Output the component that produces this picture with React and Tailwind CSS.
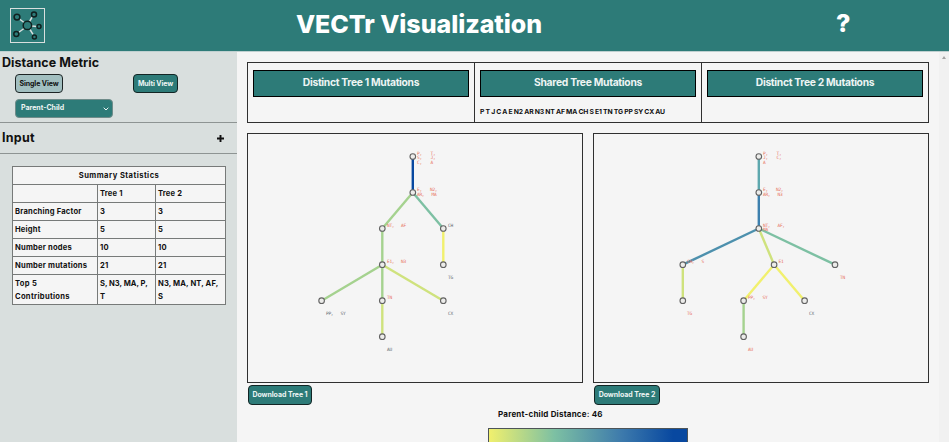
const EDGE = { green: '#a5d28f', lime: '#cfe27d', teal: '#7dc0a3', yellow: '#f1f06d', blue: '#4d90ad', navy: '#0848a0' };
const RED = '#e8705c';
const GREY = '#62676f';

const tree1 = {
  edges: [
    [165, 22.5, 165, 58.5, EDGE.navy], [165, 58.5, 134.5, 94.5, EDGE.green], [165, 58.5, 195.5, 94.5, EDGE.teal],
    [134.5, 94.5, 134.5, 130.7, EDGE.green], [195.5, 94.5, 195.5, 130.7, EDGE.yellow], [134.5, 130.7, 73.8, 166.7, EDGE.green],
    [134.5, 130.7, 134.5, 166.7, EDGE.green], [134.5, 130.7, 195.5, 166.7, EDGE.lime], [134.5, 166.7, 134.5, 202.7, EDGE.lime],
  ],
  nodes: [[165, 22.5], [165, 58.5], [134.5, 94.5], [195.5, 94.5], [134.5, 130.7], [195.5, 130.7], [73.8, 166.7], [134.5, 166.7], [195.5, 166.7], [134.5, 202.7]],
  labels: [
    [169, 21, 'P,', RED], [182.5, 21, 'T,', RED], [169, 25, 'S,', RED], [182.5, 25, 'J,', RED], [169, 29.7, 'C,', RED], [182.5, 29.7, 'A', RED],
    [169, 57, 'E,', RED], [182, 57, 'N2,', RED], [169, 61.5, 'AR,', RED], [183.5, 61.5, 'MA', RED],
    [139, 93, 'NT,', RED], [153, 93, 'AF', RED], [200, 93, 'CH', GREY],
    [139, 129, 'E1,', RED], [153, 129, 'N3', RED], [200, 145, 'TG', GREY],
    [78, 181, 'PP,', GREY], [92.5, 181, 'SY', GREY], [139, 165, 'TN', RED], [200, 181, 'CX', GREY], [139, 217, 'AU', GREY],
  ],
};

const tree2 = {
  edges: [
    [165, 22.5, 165, 58.5, '#5ea8ae'], [165, 58.5, 165, 94.5, '#3d80ae'], [165, 94.5, 89, 130.7, EDGE.blue],
    [165, 94.5, 180.3, 130.7, EDGE.lime], [165, 94.5, 241.2, 130.7, EDGE.teal], [89, 130.7, 89, 166.7, EDGE.lime],
    [180.3, 130.7, 149.8, 166.7, EDGE.yellow], [180.3, 130.7, 210.8, 166.7, EDGE.yellow], [149.8, 166.7, 149.8, 202.7, EDGE.green],
  ],
  nodes: [[165, 22.5], [165, 58.5], [165, 94.5], [89, 130.7], [180.3, 130.7], [241.2, 130.7], [89, 166.7], [149.8, 166.7], [210.8, 166.7], [149.8, 202.7]],
  labels: [
    [169, 21, 'P,', RED], [182.5, 21, 'T,', RED], [169, 25, 'J,', RED], [182.5, 25, 'C,', RED], [169, 29.7, 'A', RED],
    [169, 57, 'E,', RED], [182, 57, 'N2,', RED], [169, 61.5, 'AR,', RED], [183.5, 61.5, 'N3', RED],
    [169, 93, 'NT,', RED], [183.5, 93, 'AF,', RED], [169, 97.3, 'MA', RED],
    [93, 129, 'CH,', RED], [107.5, 129, 'S', RED], [184.5, 129, 'E1', RED], [246, 145, 'TN', RED],
    [93, 181, 'TG', RED], [154, 165, 'PP,', RED], [168.5, 165, 'SY', RED], [215, 181, 'CX', GREY], [154, 217, 'AU', RED],
  ],
};

function Tree({ data, title }) {
  return (
    <svg viewBox="0 0 334 249" width="334" height="249" className="block" role="img" aria-label={title}>
      {data.edges.map(([x1, y1, x2, y2, color], i) => (
        <line key={i} x1={x1 - 0.2} y1={y1} x2={x2 - 0.2} y2={y2} stroke={color} strokeWidth="2.4" />
      ))}
      {data.nodes.map(([x, y], i) => (
        <circle key={i} cx={x - 0.2} cy={y} r="2.8" fill="#ececea" stroke="#626262" strokeWidth="1.1" />
      ))}
      {data.labels.map(([x, y, label, color], i) => (
        <text key={i} x={x} y={y} fill={color} fontSize="4.5" letterSpacing="-0.3" fontFamily="DejaVu Sans Mono, monospace">{label}</text>
      ))}
    </svg>
  );
}

function Logo() {
  return (
    <svg width="36" height="36" viewBox="0 0 36 36" fill="none" className="ml-[10px]">
      <rect x="0.5" y="0.5" width="34" height="34" stroke="#d9dfde" strokeWidth="1" />
      <g stroke="#d9dfde" strokeWidth="1.5">
        <path d="M14 14.500 9.500 11M19.500 13.500 22.200 9M22 18l4.500.600M20 21.500 23 26.300M14 20.500 8.500 24.500" />
      </g>
      <g stroke="#10201f" strokeWidth="1.5">
        <circle cx="17.4" cy="17.4" r="4.2" />
        <circle cx="7" cy="9.1" r="2.9" />
        <circle cx="24" cy="6.4" r="2.5" />
        <circle cx="29" cy="18.6" r="2" />
        <circle cx="24.4" cy="29" r="2" />
        <circle cx="6.3" cy="26.1" r="2.5" />
      </g>
    </svg>
  );
}

function MutationColumn({ title, tracking, children }) {
  return (
    <div className="w-[227px] shrink-0 border-r border-[#303030] px-[5px] pt-[7px] last:w-[226px] last:border-r-0">
      <div className={`flex h-[27px] items-center justify-center border border-black bg-[#2d7b78] text-[10.3px] font-bold text-[#eef5f4] ${tracking}`}>{title}</div>
      <div className="mt-[9px] h-[12px] whitespace-nowrap text-[6.8px] font-bold leading-[12px] tracking-[-0.12px] [word-spacing:-0.27px]">{children}</div>
    </div>
  );
}

function TreePanel({ data, title, width }) {
  return (
    <div className="w-[336px]">
      <div className="h-[250px] overflow-hidden border border-[#303030]"><Tree data={data} title={title} /></div>
      <button className={`ml-px mt-[2px] flex h-[20px] items-center justify-center rounded-[4px] border border-[#132524] bg-[#2d7b78] text-[7px] font-bold tracking-[-0.05px] text-[#eef5f4] ${width}`}>{title}</button>
    </div>
  );
}

const rows = [
  ['', 'Tree 1', 'Tree 2'],
  ['Branching Factor', '3', '3'],
  ['Height', '5', '5'],
  ['Number nodes', '10', '10'],
  ['Number mutations', '21', '21'],
];
const cell = 'border border-[#777a79] px-[2px] pt-[2px] pb-0';

export default function App() {
  return (
    <div className="flex h-[442px] w-[949px] flex-col overflow-hidden bg-[#f5f5f5] font-[Inter,sans-serif] text-[#111]">
      <header className="grid h-[52px] shrink-0 grid-cols-[211px_416px_1fr] items-center border-b border-[#bfd0d0] bg-[#2d7b78] text-white">
        <Logo />
        <h1 className="whitespace-nowrap pb-[2px] text-center text-[25px] font-extrabold leading-none tracking-[-0.05px]">VECTr Visualization</h1>
        <span className="ml-[209px] pb-[4px] text-[25px] font-extrabold leading-none">?</span>
      </header>

      <div className="flex min-h-0 flex-1">
        <aside className="w-[237px] shrink-0 bg-[#d9dfde]">
          <section className="h-[71px] border-b border-[#8e9493]">
            <h2 className="ml-[2px] pt-[3px] text-[12.5px] font-bold leading-[16px] tracking-[0.04px]">Distance Metric</h2>
            <div className="ml-[15px] mt-[3px] flex">
              <button className="h-[19px] w-[48px] rounded-[4px] border border-[#1d2424] bg-[#a2bfc0] text-[7px] font-bold leading-none tracking-[-0.1px]">Single View</button>
              <button className="ml-[70px] h-[19px] w-[45px] rounded-[4px] border border-[#132524] bg-[#2d7b78] text-[7px] font-bold leading-none tracking-[-0.1px] text-[#eef5f4]">Multi View</button>
            </div>
            <div className="ml-[15px] mt-[6px] flex h-[19px] w-[98px] items-center justify-between rounded-[4px] border border-[#6f8c8a] bg-[#2d7b78] pl-[5px] pr-[3px] text-[7px] font-bold text-[#eef5f4]">
              <span>Parent-Child</span>
              <svg width="6" height="4" viewBox="0 0 6 4" fill="none"><path d="m.7.7 2.300 2.300L5.300.7" stroke="currentColor" /></svg>
            </div>
          </section>
          <section className="flex h-[31px] items-center justify-between border-b border-[#8e9493] pl-[2px] pr-[13px]">
            <h2 className="pt-px text-[12.5px] font-bold tracking-[0.25px]">Input</h2>
            <svg width="7" height="7" viewBox="0 0 7 7"><path d="M3.500 0v7M0 3.500h7" stroke="#111" strokeWidth="1.900" /></svg>
          </section>
          <table className="ml-[12px] mt-[12px] w-[214px] table-fixed border-collapse bg-[#f5f5f5] text-[7.6px] font-bold leading-[12.5px]">
            <colgroup><col className="w-[85px]" /><col className="w-[58px]" /><col className="w-[70px]" /></colgroup>
            <tbody>
              <tr className="h-[18px]"><td colSpan="3" className={`${cell} text-center tracking-[0.45px]`}>Summary Statistics</td></tr>
              {rows.map((row, i) => (
                <tr key={i} className="h-[18px]">
                  {row.map((v, j) => <td key={j} className={`${cell} whitespace-nowrap ${i === 0 ? 'tracking-[0.15px]' : 'tracking-[0.2px]'}`}>{v}</td>)}
                </tr>
              ))}
              <tr className="h-[30px]">
                <td className={`${cell} tracking-[0.3px]`}>Top 5<br />Contributions</td>
                <td className={`${cell} whitespace-nowrap`}>S, N3, MA, P,<br />T</td>
                <td className={`${cell} whitespace-nowrap tracking-[0.12px]`}>N3, MA, NT, AF,<br />S</td>
              </tr>
            </tbody>
          </table>
        </aside>

        <main className="min-w-0 flex-1 overflow-hidden pl-[10px] pt-[9.5px]">
          <div className="flex h-[61px] w-[682px] border border-[#303030]">
            <MutationColumn title="Distinct Tree 1 Mutations" tracking="tracking-[-0.3px]" />
            <MutationColumn title="Shared Tree Mutations" tracking="tracking-[-0.28px]">P T J C A E N2 AR N3 NT AF MA CH S E1 TN TG PP SY CX AU</MutationColumn>
            <MutationColumn title="Distinct Tree 2 Mutations" tracking="tracking-[-0.3px]" />
          </div>
          <div className="mt-[10.5px] flex gap-[10px]">
            <TreePanel data={tree1} title="Download Tree 1" width="w-[64px]" />
            <TreePanel data={tree2} title="Download Tree 2" width="w-[66px]" />
          </div>
          <p className="ml-[251px] mt-[3px] whitespace-nowrap text-[8px] font-bold leading-[12px] tracking-[0.2px]">Parent-child Distance: 46</p>
          <div className="ml-[241px] mt-[8px] h-[30px] w-[200px] border border-[#4d5458] bg-[linear-gradient(90deg,#f1f06d,#7dc0a3_33%,#3d7aac_67%,#0848a0_93%)]" />
        </main>
        <div className="flex w-[10px] shrink-0 justify-center bg-[#f1f1f1] pt-[4px]">
          <svg width="4" height="3" viewBox="0 0 4 3"><path d="M2 0 4 3H0z" fill="#a4a4a4" /></svg>
        </div>
      </div>
    </div>
  );
}
